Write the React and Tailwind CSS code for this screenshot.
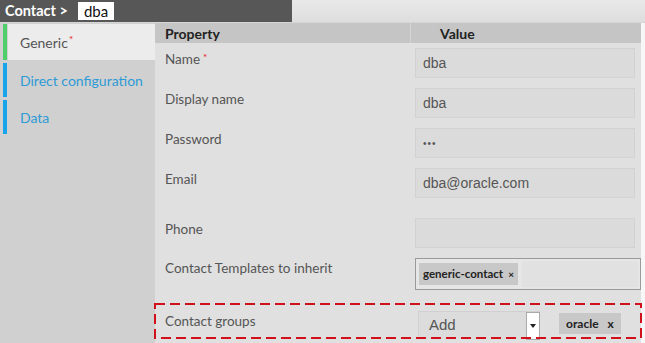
import React from 'react';

const LATO = { fontFamily: 'Lato, "Open Sans", sans-serif' };

const rows = [
  { label: 'Name', required: true, value: 'dba', h: 'h-[40px]' },
  { label: 'Display name', value: 'dba', h: 'h-[40px]' },
  { label: 'Password', value: '•••', h: 'h-[40px]', small: true },
  { label: 'Email', value: 'dba@oracle.com', h: 'h-[50px]' },
  { label: 'Phone', value: '', h: 'h-[40px]' },
];

function Tab({ label, active, required }) {
  return (
    <div className={`flex ${active ? 'h-[36px]' : 'h-[34px]'} pl-[3px]`}>
      <div className={`w-[4px] ${active ? 'bg-[#4fcf6c]' : 'bg-[#17a4ea]'}`}></div>
      <div className={`ml-[1px] flex-1 flex items-center pl-[12px] text-[14px] ${active ? 'bg-[#ececec] text-[#555]' : 'text-[#2d9bd6]'}`}>
        {label}
        {required && <span className="text-[#e8141c] text-[10px] relative -top-[3px] ml-[1px]">*</span>}
      </div>
    </div>
  );
}

function Field({ row }) {
  return (
    <div className={`flex items-start ${row.h}`}>
      <div className="w-[256px] pl-[10px] pt-[6px] text-[13.5px] text-[#555]" style={LATO}>
        {row.label}
        {row.required && <span className="text-[#e8141c] text-[10px] relative -top-[3px] ml-[3px]">*</span>}
      </div>
      <div className="pl-[4px] pt-[5px]">
        <div
          className={`w-[220px] h-[30px] bg-[#dbdbdb] border border-[#d2d2d2] flex items-center pl-[7px] text-[#555] ${row.small ? 'text-[10px] tracking-[1px]' : 'text-[14px]'}`}
          style={{ fontFamily: '"Liberation Sans", Arial, sans-serif' }}
        >
          {row.value}
        </div>
      </div>
    </div>
  );
}

export default function App() {
  return (
    <div className="w-[645px] h-[343px] overflow-hidden bg-[#e0e0e0] flex flex-col" style={LATO}>
      {/* breadcrumb bar */}
      <div className="flex h-[22px] shrink-0 bg-gradient-to-b from-[#e9e9e9] to-[#dedede]">
        <div className="w-[292px] bg-[#575757] flex items-center pl-[5px] gap-[10px]">
          <span className="text-white font-bold text-[14.5px]">Contact &gt;</span>
          <span className="bg-white text-[#111] text-[15px] h-[18px] px-[6px] flex items-center leading-none">dba</span>
        </div>
      </div>

      <div className="flex flex-1 min-h-0 border-t border-[#d6d6d6]">
        {/* side tabs */}
        <div className="w-[155px] bg-[#d0d0d0] pt-[1px] flex flex-col gap-[3px]">
          <Tab label="Generic" active required />
          <Tab label="Direct configuration" />
          <Tab label="Data" />
        </div>

        {/* property table */}
        <div className="flex-1 flex flex-col">
          <div className="flex h-[20px] bg-[#c5c5c5] text-[14px] font-bold text-[#222] items-center">
            <div className="w-[255px] pl-[10px]">Property</div>
            <div className="w-[1px] h-full bg-[#d6d6d6]"></div>
            <div className="pl-[29px]">Value</div>
          </div>

          {rows.map((r) => (
            <Field key={r.label} row={r} />
          ))}

          {/* templates */}
          <div className="flex items-start h-[50px]">
            <div className="w-[256px] pl-[10px] pt-[5px] text-[13.5px] text-[#555]">Contact Templates to inherit</div>
            <div className="pl-[4px] pt-[5px]">
              <div className="w-[226px] h-[32px] border border-[#9a9a9a] bg-[#e6e6e6] flex items-center pl-[3px] gap-[4px]">
                <span className="h-[22px] bg-[#c8c8c8] flex items-center px-[4px] text-[11.5px] font-bold text-[#222]">
                  generic-contact <span className="ml-[5px] text-[10px]">×</span>
                </span>
                <span className="flex-1 h-[26px] bg-[#e1e1e1] mr-[2px]"></span>
              </div>
            </div>
          </div>

          {/* contact groups, highlighted */}
          <div className="relative flex items-start h-[36px] -ml-[1px]">
            <svg className="absolute left-0 top-0" width="488" height="36">
              <rect x="1" y="1" width="486" height="34" fill="none" stroke="#d0101a" strokeWidth="2" strokeDasharray="10 5" />
            </svg>
            <div className="w-[257px] pl-[11px] pt-[8px] text-[13.5px] text-[#555]">Contact groups</div>
            <div className="pl-[7px] pt-[8px] flex items-start">
              <div className="w-[122px] h-[28px] bg-[#dcdcdc] border-l border-t border-[#d0d0d0] flex items-center">
                <span className="flex-1 pl-[10px] text-[15px] text-[#555]" style={{ fontFamily: '"Liberation Sans", Arial, sans-serif' }}>Add</span>
                <span className="w-[14px] h-[28px] bg-white border border-[#aaa] flex items-center justify-center">
                  <svg width="6" height="4"><path d="M0 0 L6 0 L3 4 Z" fill="#222" /></svg>
                </span>
              </div>
              <span className="ml-[19px] mt-[2px] h-[21px] bg-[#c8c8c8] flex items-center px-[7px] text-[12px] font-bold text-[#222]">
                oracle <span className="ml-[9px]">x</span>
              </span>
            </div>
          </div>
        </div>

        <div className="w-[4px] bg-[#f7f7f7]"></div>
      </div>
    </div>
  );
}
